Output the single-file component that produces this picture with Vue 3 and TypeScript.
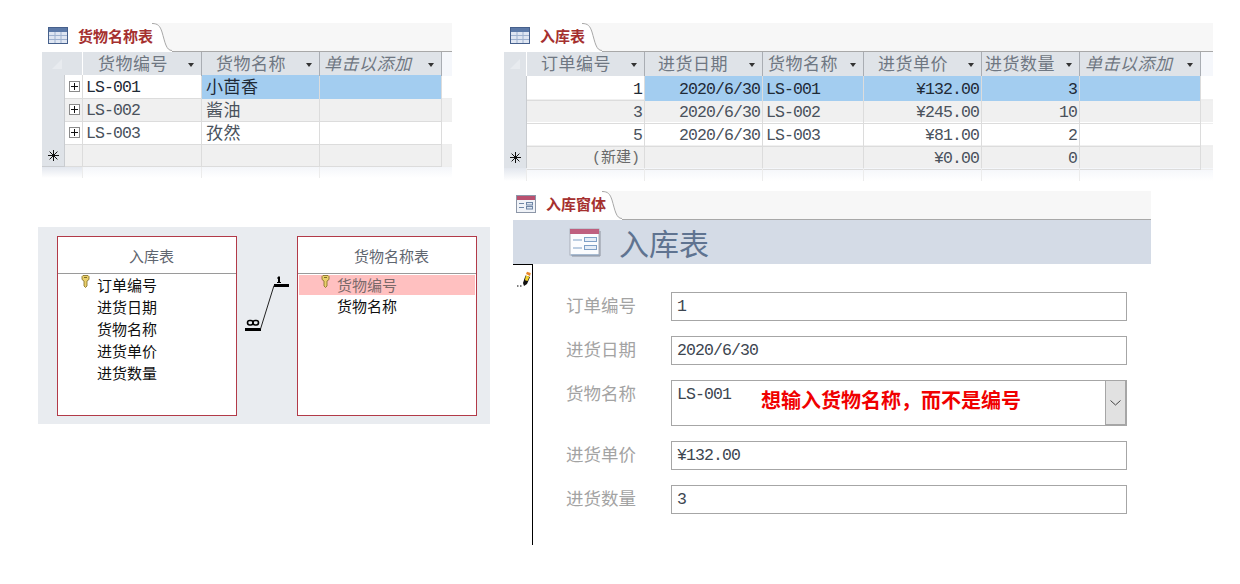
<script setup lang="ts">
interface Col { w: number; label: string; pad: number; italic?: boolean; right?: boolean }
interface Sheet {
  id: string; title: string; headH: number; expand: boolean; filler: number;
  cols: Col[]; rows: string[][]; sel: number[];
}

const sheets: Sheet[] = [
  {
    id: 'goods', title: '货物名称表', headH: 23, expand: true, filler: 10, sel: [1, 2],
    cols: [
      { w: 119, label: '货物编号', pad: 15 },
      { w: 118, label: '货物名称', pad: 14 },
      { w: 122, label: '单击以添加', pad: 4, italic: true },
    ],
    rows: [
      ['LS-001', '小茴香', ''],
      ['LS-002', '酱油', ''],
      ['LS-003', '孜然', ''],
      ['', '', ''],
    ],
  },
  {
    id: 'stock', title: '入库表', headH: 24, expand: false, filler: 12, sel: [1, 2, 3, 4, 5],
    cols: [
      { w: 118, label: '订单编号', pad: 14, right: true },
      { w: 118, label: '进货日期', pad: 13, right: true },
      { w: 101, label: '货物名称', pad: 5 },
      { w: 118, label: '进货单价', pad: 14, right: true },
      { w: 98, label: '进货数量', pad: 3, right: true },
      { w: 121, label: '单击以添加', pad: 5, italic: true },
    ],
    rows: [
      ['1', '2020/6/30', 'LS-001', '¥132.00', '3', ''],
      ['3', '2020/6/30', 'LS-002', '¥245.00', '10', ''],
      ['5', '2020/6/30', 'LS-003', '¥81.00', '2', ''],
      ['(新建)', '', '', '¥0.00', '0', ''],
    ],
  },
];

function gridFor(s: Sheet): string {
  const lead = s.expand ? '23px 18px' : '23px';
  return `${lead} ${s.cols.map((c) => c.w + 'px').join(' ')} ${s.filler}px`;
}
const isCjk = (t: string) => /^[\u4e00-\u9fff]+$/.test(t);

const diagramA = ['订单编号', '进货日期', '货物名称', '进货单价', '进货数量'];
const diagramB = ['货物编号', '货物名称'];
const fields = [
  { label: '订单编号', value: '1' },
  { label: '进货日期', value: '2020/6/30' },
  { label: '货物名称', value: 'LS-001', combo: true },
  { label: '进货单价', value: '¥132.00' },
  { label: '进货数量', value: '3' },
];
</script>

<template>
  <div class="page">
    <div class="col-left">
      <section class="sheet sheet-goods">
        <div class="strip">
          <div class="tab">
            <svg class="ticon" width="20" height="17" viewBox="0 0 20 17">
              <rect x="0.5" y="0.5" width="19" height="16" fill="#dfe6f2" stroke="#46608c" />
              <rect x="1" y="1" width="18" height="4" fill="#5d7aa8" />
              <path d="M7 5v11M13 5v11M1 8.5h18M1 12.5h18" stroke="#9fb2cf" fill="none" />
            </svg>
            <span class="tab-title">{{ sheets[0].title }}</span>
          </div>
          <svg class="curve" width="20" height="29" viewBox="0 0 20 29">
            <path d="M0 0C6 0 8 3 10 9C13 19 14 28 20 28L20 29L0 29Z" fill="#fff" />
            <path d="M0 .5C6 .5 8 3 10 9C13 19 14 27.5 20 27.5" fill="none" stroke="#a8a8a8" />
          </svg>
        </div>
        <div class="head" :style="{ gridTemplateColumns: gridFor(sheets[0]), height: sheets[0].headH + 'px' }">
          <div class="corner wide">
            <svg width="12" height="12" viewBox="0 0 12 12"><path d="M1 11L11 1V11Z" fill="#e8ebef" /></svg>
          </div>
          <div v-for="c in sheets[0].cols" :key="c.label" class="hcell" :class="{ italic: c.italic }" :style="{ paddingLeft: c.pad + 'px' }">
            <span class="hlabel">{{ c.label }}</span><i class="tri"></i>
          </div>
          <div class="hfill"></div>
        </div>
        <div v-for="(r, ri) in sheets[0].rows" :key="ri" class="row" :class="{ alt: ri % 2 === 1 }" :style="{ gridTemplateColumns: gridFor(sheets[0]) }">
          <div class="selector">
            <svg v-if="ri === 3" width="13" height="13" viewBox="0 0 13 13"><path d="M6.5 1v11M1 6.5h11M2.6 2.6l7.8 7.8M10.4 2.6l-7.8 7.8" stroke="#111" fill="none" /></svg>
          </div>
          <div class="expander">
            <span v-if="ri < 3" class="plus"></span>
          </div>
          <div v-for="(v, ci) in r" :key="ci" class="cell" :class="{ sel: ri === 0 && sheets[0].sel.includes(ci), cjk: isCjk(v), strong: ri === 0 }">{{ v }}</div>
          <div class="rfill"></div>
        </div>
        <div class="fade" :style="{ gridTemplateColumns: gridFor(sheets[0]) }">
          <div class="fsel wide2"></div><div></div><div></div><div></div>
        </div>
      </section>

      <section class="diagram">
        <div class="dbox">
          <div class="dtitle">入库表</div>
          <div class="dlist">
            <div v-for="(n, i) in diagramA" :key="n" class="ditem">
              <svg v-if="i === 0" class="key" width="9" height="13" viewBox="0 0 9 13">
                <path d="M1 1.5L2 .5H7L8 1.5V4.5L6 6V11L4.5 12.5L3 11V6L1 4.5Z" fill="#e9cf6b" stroke="#7d6a22" stroke-width=".8" />
                <path d="M3 2.5H6" stroke="#7d6a22" />
              </svg>
              <span>{{ n }}</span>
            </div>
          </div>
        </div>
        <svg class="rel" width="60" height="100" viewBox="237 236 60 100">
          <path d="M245 329.5H261M274 285.5H289" stroke="#000" stroke-width="3" fill="none" />
          <path d="M260.5 329L274 285.5" stroke="#222" fill="none" />
          <path d="M278 276.5h2v6h-2zM277 282h4v1h-4zM277 277.5h1v1h-1z" fill="#000" />
          <g fill="none" stroke="#000" stroke-width="1.6">
            <rect x="247.5" y="320.5" width="5.5" height="4.5" rx="2.2" />
            <rect x="253" y="320.5" width="5.5" height="4.5" rx="2.2" />
          </g>
        </svg>
        <div class="dbox">
          <div class="dtitle">货物名称表</div>
          <div class="dlist">
            <div v-for="(n, i) in diagramB" :key="n" class="ditem" :class="{ hit: i === 0 }">
              <svg v-if="i === 0" class="key" width="9" height="13" viewBox="0 0 9 13">
                <path d="M1 1.5L2 .5H7L8 1.5V4.5L6 6V11L4.5 12.5L3 11V6L1 4.5Z" fill="#e9cf6b" stroke="#7d6a22" stroke-width=".8" />
                <path d="M3 2.5H6" stroke="#7d6a22" />
              </svg>
              <span>{{ n }}</span>
            </div>
          </div>
        </div>
      </section>
    </div>

    <div class="col-right">
      <section class="sheet sheet-stock">
        <div class="strip">
          <div class="tab tab-stock">
            <svg class="ticon" width="20" height="17" viewBox="0 0 20 17">
              <rect x="0.5" y="0.5" width="19" height="16" fill="#dfe6f2" stroke="#46608c" />
              <rect x="1" y="1" width="18" height="4" fill="#5d7aa8" />
              <path d="M7 5v11M13 5v11M1 8.5h18M1 12.5h18" stroke="#9fb2cf" fill="none" />
            </svg>
            <span class="tab-title">{{ sheets[1].title }}</span>
          </div>
          <svg class="curve" width="20" height="29" viewBox="0 0 20 29">
            <path d="M0 0C6 0 8 3 10 9C13 19 14 28 20 28L20 29L0 29Z" fill="#fff" />
            <path d="M0 .5C6 .5 8 3 10 9C13 19 14 27.5 20 27.5" fill="none" stroke="#a8a8a8" />
          </svg>
        </div>
        <div class="head" :style="{ gridTemplateColumns: gridFor(sheets[1]), height: sheets[1].headH + 'px' }">
          <div class="corner">
            <svg width="12" height="12" viewBox="0 0 12 12"><path d="M1 11L11 1V11Z" fill="#e8ebef" /></svg>
          </div>
          <div v-for="c in sheets[1].cols" :key="c.label" class="hcell" :class="{ italic: c.italic }" :style="{ paddingLeft: c.pad + 'px' }">
            <span class="hlabel">{{ c.label }}</span><i class="tri"></i>
          </div>
          <div class="hfill"></div>
        </div>
        <div v-for="(r, ri) in sheets[1].rows" :key="ri" class="row" :class="{ alt: ri % 2 === 1 }" :style="{ gridTemplateColumns: gridFor(sheets[1]) }">
          <div class="selector">
            <svg v-if="ri === 3" width="13" height="13" viewBox="0 0 13 13"><path d="M6.5 1v11M1 6.5h11M2.6 2.6l7.8 7.8M10.4 2.6l-7.8 7.8" stroke="#111" fill="none" /></svg>
          </div>
          <div v-for="(v, ci) in r" :key="ci" class="cell" :class="{ sel: ri === 0 && sheets[1].sel.includes(ci), right: sheets[1].cols[ci].right, strong: ri === 0, isnew: v === '(新建)' }">{{ v }}</div>
          <div class="rfill"></div>
        </div>
        <div class="fade" :style="{ gridTemplateColumns: gridFor(sheets[1]) }">
          <div class="fsel"></div><div></div><div></div><div></div><div></div><div></div><div></div>
        </div>
      </section>

      <section class="form">
        <div class="strip strip-form">
          <div class="tab tab-form">
            <svg class="ticon" width="20" height="18" viewBox="0 0 20 18">
              <rect x="0.5" y="0.5" width="19" height="17" fill="#f0f3f8" stroke="#8d97a8" />
              <rect x="1" y="1" width="18" height="4" fill="#b9506f" />
              <path d="M3 8.5h5M3 12.5h5" stroke="#6f86a6" fill="none" />
              <rect x="10.5" y="7.5" width="6" height="2.5" fill="#dde6f2" stroke="#6f86a6" />
              <rect x="10.5" y="11.5" width="6" height="2.5" fill="#dde6f2" stroke="#6f86a6" />
            </svg>
            <span class="tab-title">入库窗体</span>
          </div>
          <svg class="curve" width="20" height="29" viewBox="0 0 20 29">
            <path d="M0 0C6 0 8 3 10 9C13 19 14 28 20 28L20 29L0 29Z" fill="#fff" />
            <path d="M0 .5C6 .5 8 3 10 9C13 19 14 27.5 20 27.5" fill="none" stroke="#a8a8a8" />
          </svg>
        </div>
        <div class="band">
          <svg width="32" height="29" viewBox="0 0 32 29">
            <rect x="1" y="1" width="29" height="26" fill="#fbfcfe" stroke="#a9afba" />
            <rect x="1" y="1" width="29" height="5" fill="#bf5f7f" />
            <path d="M4 12h9M4 20h9M30 27H2" stroke="#7fa0c6" fill="none" />
            <rect x="15.5" y="9.5" width="12" height="4" fill="#e6eef8" stroke="#7fa0c6" />
            <rect x="15.5" y="17.5" width="12" height="4" fill="#e6eef8" stroke="#7fa0c6" />
            <path d="M31 3v25H3" stroke="#8b919c" fill="none" />
          </svg>
          <span class="band-title">入库表</span>
        </div>
        <div class="fbody">
          <div class="gutter">
            <svg width="15" height="16" viewBox="0 0 15 16">
              <path d="M7 12L9.5 4.5L14 6L11 13L8 15Z" fill="#111" />
              <path d="M10 3L11 .8L14.8 2L14 5Z" fill="#e9862a" />
              <path d="M9.8 4.5L13.5 5.8L11.5 10L9 9.3Z" fill="#f3d32e" />
              <path d="M1 15h1.5M4 15h1.5" stroke="#000" fill="none" />
            </svg>
          </div>
          <div class="fields">
            <div v-for="f in fields" :key="f.label" class="frow" :class="{ 'frow-combo': f.combo }">
              <label class="flabel">{{ f.label }}</label>
              <div class="fbox" :class="{ combo: f.combo }">
                <span class="fval">{{ f.value }}</span>
                <template v-if="f.combo">
                  <span class="note">想输入货物名称，而不是编号</span>
                  <span class="dropbtn">
                    <svg width="11" height="6" viewBox="0 0 11 6"><path d="M.5 .5L5.5 5L10.5 .5" fill="none" stroke="#444" /></svg>
                  </span>
                </template>
              </div>
            </div>
          </div>
        </div>
      </section>
    </div>
  </div>
</template>

<style>
html, body { margin: 0; background: #fff; }
</style>

<style scoped>
.page {
  display: flex;
  width: 1240px;
  height: 584px;
  overflow: hidden;
  box-sizing: border-box;
  padding: 23px 0 0 38px;
  background: #fff;
  font-family: "Noto Sans CJK SC", "Liberation Sans", sans-serif;
}
.col-left { width: 466px; flex: none; display: flex; flex-direction: column; }
.col-right { flex: 1; display: flex; flex-direction: column; }
.sheet-goods { width: 410px; margin-left: 4px; height: 153px; }
.sheet-stock { width: 709px; height: 156px; }

.strip {
  display: flex;
  height: 28px;
  background: #f7f7f7;
  border-bottom: 1px solid #a8a8a8;
}
.tab {
  display: flex;
  align-items: center;
  height: 29px;
  background: #fff;
  padding-left: 6px;
  box-sizing: border-box;
  flex: none;
  width: 110px;
}
.tab .ticon { flex: none; margin-top: -5px; }
.tab-title {
  position: relative;
  z-index: 1;
  margin: -4px 0 0 10px;
  font-size: 15px;
  line-height: 20px;
  font-weight: 700;
  color: #a5302f;
  white-space: nowrap;
}
.curve { flex: none; display: block; }
.tab-stock { width: 78px; }
.tab-form { width: 89px; padding-left: 3px; }
.tab-form .ticon { margin-top: -3px; }

.head { display: grid; background: #dfe3e8; }
.corner {
  display: flex; align-items: center; justify-content: center;
  border-right: 1px solid #fff;
  box-sizing: border-box;
}
.corner.wide { grid-column: span 2; justify-content: flex-start; padding-left: 9px; }
.hcell {
  display: flex; align-items: center; position: relative;
  border-right: 1px solid #a9adb3;
  box-sizing: border-box;
  font-size: 17px;
  letter-spacing: .5px;
  color: #6f7782;
  white-space: nowrap;
}
.hcell:last-of-type { border-right: 0; }
.hcell.italic { font-style: italic; color: #6f7782; }
.hlabel { line-height: 22px; padding-bottom: 2px; }
.tri {
  position: absolute;
  right: 7px; top: 11px;
  width: 0; height: 0;
  border-left: 3.5px solid transparent;
  border-right: 3.5px solid transparent;
  border-top: 4px solid #333;
}
.hfill { background: #f5f7fb; }

.row { display: grid; height: 23px; box-sizing: border-box; background: #fff; }
.row.alt { background: #f0f0f0; }
.selector {
  background: #dfe3e8;
  border-bottom: 1px solid #c9ccd0;
  border-right: 1px solid #c9ccd0;
  display: flex; align-items: center; justify-content: center;
  box-sizing: border-box;
}
.expander {
  border-bottom: 1px solid #dcdcdc;
  border-right: 1px solid #dcdcdc;
  display: flex; align-items: center; padding-left: 4px;
  box-sizing: border-box;
}
.plus {
  width: 9px; height: 9px;
  border: 1px solid #8a8a8a;
  background:
    linear-gradient(#111, #111) center / 7px 1px no-repeat,
    linear-gradient(#111, #111) center / 1px 7px no-repeat,
    #fff;
}
.cell {
  border-bottom: 1px solid #dcdcdc;
  border-right: 1px solid #dcdcdc;
  box-sizing: border-box;
  padding: 3px 2px 0 3px;
  font: 16.5px/21px "Liberation Mono", "Noto Sans CJK SC", monospace;
  letter-spacing: -.9px;
  color: #4a525c;
  white-space: nowrap;
}
.sheet-goods .cell { padding-top: 2px; }
.cell.strong { color: #1f2a36; }
.cell.right { text-align: right; padding-right: 2px; }
.cell.sel { background: #a3cdf0; border-bottom-color: #a3cdf0; }
.cell.cjk {
  padding: 0 0 0 4px;
  font: 17px/22px "Noto Sans CJK SC", sans-serif;
  letter-spacing: .5px;
}
.cell.isnew { color: #6a6a6a; padding-right: 4px; letter-spacing: 0; font-size: 15px; }
.rfill { border-bottom: 1px solid #eeeeee; }

.fade {
  display: grid;
  height: 11px;
  background: linear-gradient(#f4f6fa, #ffffff);
}
.fade > div { border-right: 1px solid #ececec; box-sizing: border-box; }
.fade > div:last-child { border-right: 0; }
.fsel { background: linear-gradient(#e3e7ee, #ffffff); }
.wide2 { grid-column: span 2; }
.sheet-stock .fade { height: 13px; }

.diagram {
  margin-top: 51px;
  width: 452px;
  height: 197px;
  box-sizing: border-box;
  padding: 9px 0 0 19px;
  background: #e9ecf0;
  display: flex;
  align-items: flex-start;
}
.dbox {
  width: 180px; height: 180px;
  box-sizing: border-box;
  background: #fff;
  border: 1px solid #b23a48;
  flex: none;
}
.rel { flex: none; display: block; }
.dtitle {
  height: 36px;
  border-bottom: 1px solid #9a9a9a;
  box-sizing: content-box;
  text-align: center;
  padding-left: 9px;
  font-size: 15px;
  line-height: 37px;
  color: #5f6670;
}
.dlist { padding: 1px 1px 0; }
.ditem {
  position: relative;
  height: 22px;
  line-height: 20px;
  font-size: 15px;
  color: #101010;
  padding-left: 38px;
}
.ditem.hit { height: 20px; margin-bottom: 1px; background: #ffc0c0; color: #7b6a6a; }
.key { position: absolute; left: 22px; top: 0; }

.form { margin: 12px 0 0 9px; width: 638px; }
.strip-form { height: 28px; }
.band {
  height: 44px;
  background: #d4dbe6;
  display: flex;
  align-items: center;
  padding-left: 56px;
}
.band-title {
  margin-left: 18px;
  font-size: 30px;
  line-height: 40px;
  color: #5f7390;
}
.fbody { display: flex; height: 281px; }
.gutter {
  width: 20px;
  box-sizing: border-box;
  border-top: 1px solid #000;
  border-right: 1px solid #000;
  padding: 3px 0 0 3px;
  flex: none;
}
.fields {
  padding: 28px 0 0 33px;
  display: flex;
  flex-direction: column;
  gap: 15px;
}
.frow { display: flex; align-items: center; height: 29px; }
.frow-combo { height: 46px; align-items: flex-start; }
.flabel {
  width: 105px;
  font-size: 17.5px;
  line-height: 26px;
  padding-bottom: 3px;
  color: #a3a3a3;
  flex: none;
}
.fbox {
  position: relative;
  width: 456px;
  height: 29px;
  box-sizing: border-box;
  border: 1px solid #a6a6a6;
  display: flex;
  align-items: center;
  padding-left: 5px;
}
.combo { height: 46px; align-items: flex-start; padding-top: 3px; }
.fval {
  font: 16.5px/22px "Liberation Mono", monospace;
  letter-spacing: -.9px;
  color: #3d4650;
}
.note {
  position: absolute;
  left: 89px;
  top: 4px;
  font-size: 20px;
  line-height: 30px;
  font-weight: 700;
  color: #f00000;
  white-space: nowrap;
}
.dropbtn {
  position: absolute;
  right: -1px; top: -1px; bottom: -1px;
  width: 22px;
  box-sizing: border-box;
  background: #e1e1e1;
  border: 1px solid #a6a6a6;
  border-right-width: 2px;
  border-bottom-width: 2px;
  display: flex; align-items: center; justify-content: center;
}
</style>
